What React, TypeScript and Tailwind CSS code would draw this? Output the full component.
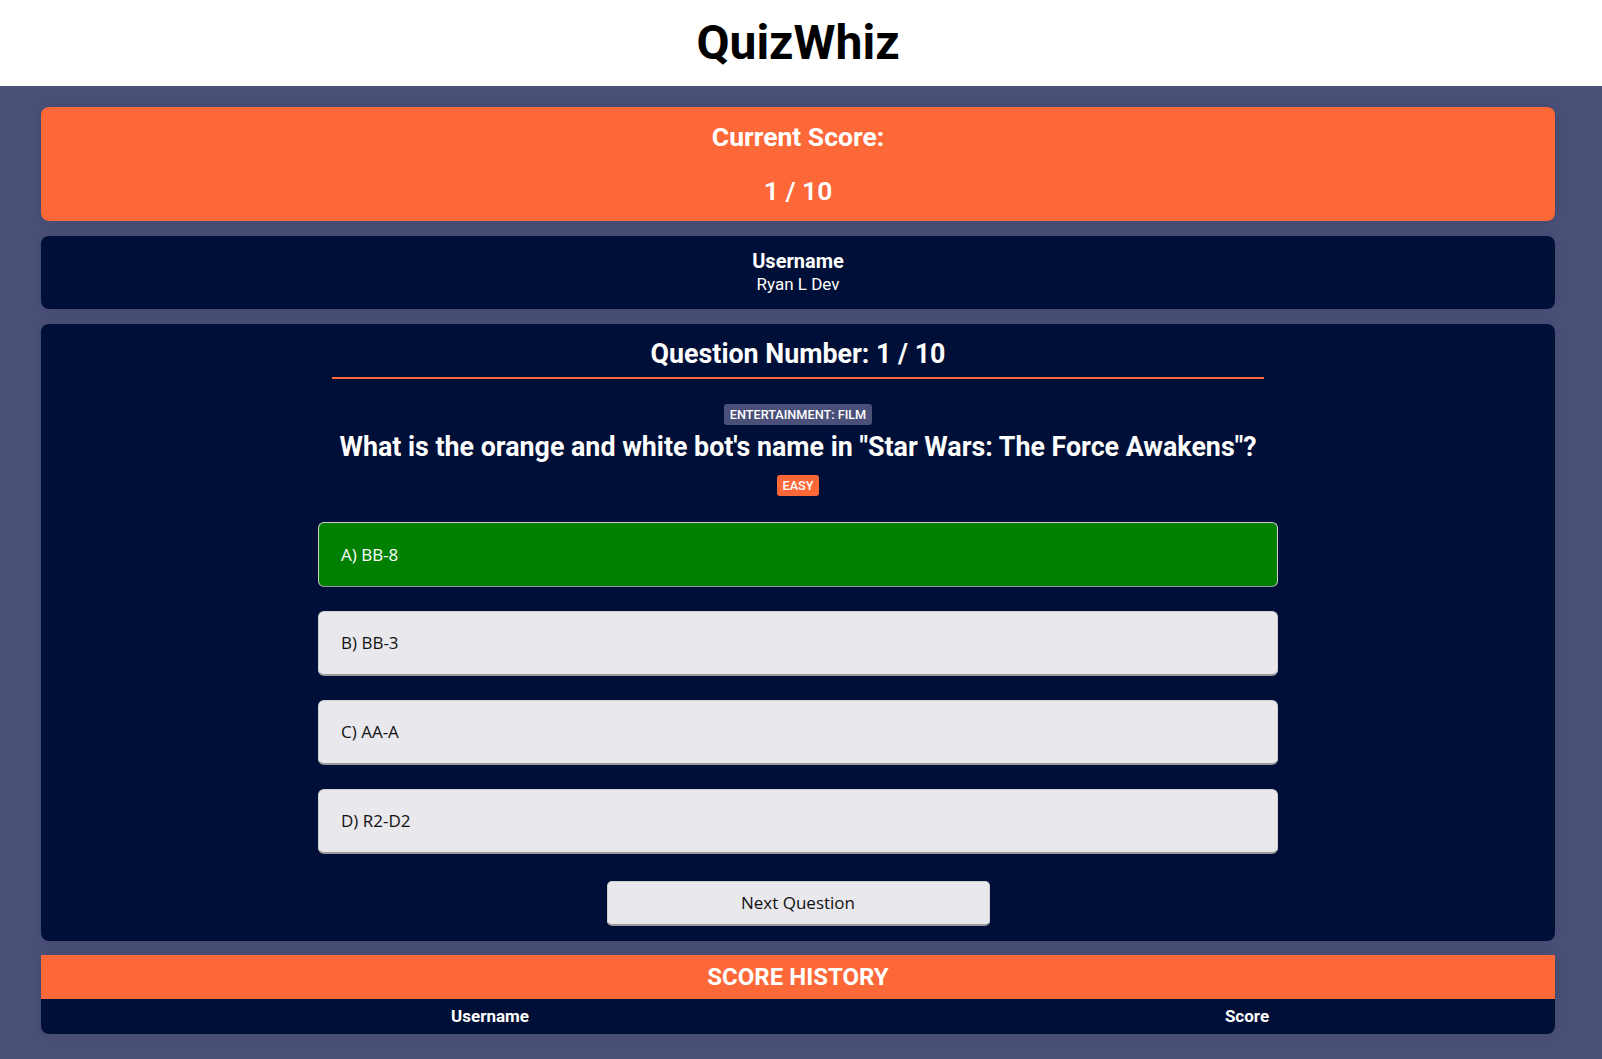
import React from 'react';

const answers = [
  { label: 'A) BB-8', correct: true },
  { label: 'B) BB-3', correct: false },
  { label: 'C) AA-A', correct: false },
  { label: 'D) R2-D2', correct: false },
];

const App = () => {
  return (
    <div className="min-h-screen bg-[#4a5078] font-['Roboto',sans-serif]">
      {/* Header */}
      <header className="h-[86px] bg-white flex items-center justify-center pr-[6px]">
        <h1 className="text-[48px] leading-[56px] font-bold text-black">QuizWhiz</h1>
      </header>

      <main className="pl-[41px] pr-[47px] pt-[21px] flex flex-col gap-[15px]">
        {/* Current score */}
        <section className="bg-[#fd6838] rounded-lg shadow-[0_0_14px_rgba(0,0,0,0.12)] py-[15px] flex flex-col items-center gap-[24px] text-white">
          <h2 className="text-[26.5px] leading-[30px] font-bold">Current Score:</h2>
          <p className="text-[26.5px] leading-[30px] font-semibold">1 / 10</p>
        </section>

        {/* Username */}
        <section className="h-[73px] bg-[#000f37] rounded-lg shadow-[0_0_14px_rgba(0,0,0,0.12)] flex flex-col items-center pt-[13px] text-white">
          <h3 className="text-[20px] leading-[25px] font-bold">Username</h3>
          <p className="text-[17px] leading-[20px]">Ryan L Dev</p>
        </section>

        {/* Question */}
        <section className="bg-[#000f37] rounded-lg shadow-[0_0_14px_rgba(0,0,0,0.12)] pt-[15px] pb-[15px] text-white">
          <div className="w-[960px] mx-auto flex flex-col items-center">
            <h2 className="self-stretch mx-[14px] pb-[8px] border-b-2 border-[#fd6838] text-center text-[26.8px] leading-[30px] font-bold">
              Question Number: 1 / 10
            </h2>
            <span className="mt-[25px] bg-[#4a5078] rounded-[3px] px-[6px] py-[3px] text-[12.7px] leading-[15px] font-medium uppercase">
              Entertainment: Film
            </span>
            <h3 className="mt-[7px] text-[26.8px] leading-[31px] font-bold text-center">
              What is the orange and white bot's name in "Star Wars: The Force Awakens"?
            </h3>
            <span className="mt-[12px] bg-[#fd6838] rounded-[3px] px-[5px] py-[3px] text-[12.7px] leading-[15px] font-medium uppercase">
              Easy
            </span>

            <div className="mt-[26px] self-stretch flex flex-col gap-[24px] font-['Open_Sans',sans-serif]">
              {answers.map((a) => (
                <button
                  key={a.label}
                  className={
                    a.correct
                      ? 'h-[65px] rounded-md border border-[#d0d0d0] border-b-[#9a9a9a] bg-[#008000] text-white text-left pl-[22px] text-[17px]'
                      : 'h-[65px] rounded-md border border-[#d0d0d0] border-b-2 border-b-[#9a9a9a] bg-[#e9e8ed] text-[#111] text-left pl-[22px] text-[17px]'
                  }
                >
                  {a.label}
                </button>
              ))}
            </div>

            <button className="mt-[27px] w-[383px] h-[45px] rounded-[5px] border border-[#d0d0d0] border-b-2 border-b-[#9a9a9a] bg-[#e9e8ed] text-[#111] text-[17px] font-['Open_Sans',sans-serif]">
              Next Question
            </button>
          </div>
        </section>

        {/* Score history */}
        <section className="-mt-[1px] rounded-b-lg overflow-hidden shadow-[0_0_14px_rgba(0,0,0,0.12)]">
          <div className="h-[44px] bg-[#fd6838] flex items-center justify-center text-white text-[24px] font-bold uppercase">
            Score History
          </div>
          <div className="h-[35px] bg-[#000f37] grid grid-cols-[898fr_616fr] items-center text-white text-[17px] font-bold">
            <span className="text-center">Username</span>
            <span className="text-center">Score</span>
          </div>
        </section>
      </main>
    </div>
  );
};

export default App;
